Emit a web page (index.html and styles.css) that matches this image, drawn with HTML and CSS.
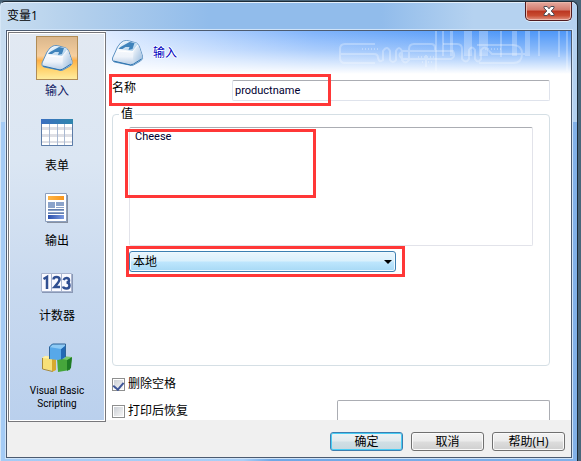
FILE: index.html
```html
<!DOCTYPE html>
<html lang="zh-CN">
<head>
<meta charset="utf-8">
<title>变量1</title>
<link rel="stylesheet" href="styles.css">
</head>
<body>
<svg class="defs" width="0" height="0" aria-hidden="true">
  <defs>
    <linearGradient id="keyTop" x1="0" y1="0" x2="1" y2="1"><stop offset="0" stop-color="#f2f9ff"/><stop offset="1" stop-color="#a9cdea"/></linearGradient>
    <linearGradient id="keySide" x1="0" y1="0" x2="0" y2="1"><stop offset="0" stop-color="#ffffff"/><stop offset=".65" stop-color="#eef3fa"/><stop offset="1" stop-color="#b4cae4"/></linearGradient>
    <linearGradient id="keyRight" x1="0" y1="0" x2="1" y2="1"><stop offset="0" stop-color="#ffffff"/><stop offset="1" stop-color="#8fb4da"/></linearGradient>
    <linearGradient id="tblHead"><stop offset="0" stop-color="#3b6fc0"/><stop offset="1" stop-color="#2f86ad"/></linearGradient>
    <linearGradient id="docHead"><stop offset="0" stop-color="#ffb545"/><stop offset="1" stop-color="#f8951c"/></linearGradient>
    <linearGradient id="docFoot"><stop offset="0" stop-color="#2c51ae"/><stop offset="1" stop-color="#7d9be0"/></linearGradient>
    <symbol id="key" viewBox="0 0 32 28">
      <path d="M6 8 Q9 3 12 2 Q15 1 18 2 L25 4 Q27 5 28 8 L31 17 Q32 20 29 22 L22 26 Q20 27 18 26 L3 23 Q0 22 1 19 Z" fill="url(#keySide)" stroke="#5e93c3"/>
      <path d="M22 12 L27 6 L31 18 Q31 20 29 21 L21 26 Z" fill="url(#keyRight)"/>
      <path d="M7 9 Q10 4 14 2 L25 4 Q27 5 25 7 L21 12 L7 10 Z" fill="url(#keyTop)"/>
      <path d="M7 10 L9 8 L18 3 L23 4 L21 10 L17 11 L18 8 L14 8 L11 10 Z" fill="#3f83bb"/>
      <path d="M6 12 L20 13 L22 12" fill="none" stroke="#fff"/>
      <path d="M2 22 L19 26 L22 25 L30 20" fill="none" stroke="#2b73af"/>
    </symbol>
  </defs>
</svg>
<div class="window">
  <header class="titlebar">
    <h1>变量1</h1>
    <button class="close" type="button" aria-label="关闭">
      <svg width="12" height="10" viewBox="0 0 12 10"><path d="M1 .5h3.200L6 2.800 7.800.500H11V2L8.200 5 11 8v1.500H7.800L6 7.200 4.200 9.500H1V8l2.800-3L1 2Z" fill="#fff" stroke="#4c4c57"/></svg>
    </button>
  </header>
  <form class="client">
    <div class="main">
      <nav class="sidebar">
        <a class="item active" href="#input"><span class="icon"><svg width="32" height="28"><use href="#key"/></svg></span>输入</a>
        <a class="item" href="#table"><span class="icon">
          <svg width="32" height="28" viewBox="0 0 32 28"><path fill="#fff" stroke="#8ba0c4" d="M.5.5h31v26H.5z"/><path fill="#dedfe5" d="M1 8h30v3H1zM1 15h30v3H1zM1 22h30v2H1z"/><path stroke="#a9b9d2" d="M8.500 5v21M16.500 5v21M23.500 5v21"/><path fill="url(#tblHead)" d="M0 0h32v5H0z"/><path fill="none" stroke="#5c7ca8" d="M.5 5v21.500h31V5"/></svg></span>表单</a>
        <a class="item" href="#output"><span class="icon">
          <svg width="24" height="31" viewBox="0 0 24 31"><path fill="#8790a0" d="M2 2h21v28H2z"/><path fill="#fff" stroke="#8c9fbd" d="M.5.5h21v28H.5z"/><path fill="url(#docHead)" d="M3 3h16v4H3z"/><path fill="#8ba3ca" d="M3 9h7v6H3zM11 9h8v4h-8zM11 14h8v1h-8zM3 17h16v1H3zM3 19h16v1H3z"/><path fill="#647fae" d="M3 16h16v1H3zM3 20h16v1H3z"/><path fill="url(#docFoot)" d="M3 22h16v4H3z"/></svg></span>输出</a>
        <a class="item" href="#counter"><span class="icon">
          <svg width="32" height="20" viewBox="0 0 32 20"><path fill="#8a98b5" d="M1 1h31v19H1z"/><path fill="#fafaff" stroke="#a9b5cf" d="M.5.5h10v18H.5zM10.500.500h10v18h-10zM20.500.500h10v18h-10z"/><g fill="none" stroke="#304f91" stroke-width="2.500"><path d="M2.500 6 6 4v12"/><path d="M12.500 6.500q0-2.500 3-2.500t3 2.500q0 2-5 7.500H19"/><path d="M22.500 7q1-2 3-2 2.500 0 2.500 2.500 0 2-2.500 2 3 0 3 3t-3 3-3.500-2"/></g></svg></span>计数器</a>
        <a class="item" href="#script"><span class="icon">
          <svg width="32" height="30" viewBox="0 0 32 30"><path fill="#f7e078" d="m1 15 3-2 10 1v14L2 26Z"/><path fill="#d7a92f" d="m11 16 4-3v14l-4 2z"/><path fill="#fff0a6" d="m1 15 3-2 11 1-4 2z"/><path fill="#46a63b" d="m16 15 15-1-2 13-12 2Z"/><path fill="#1e7b25" d="m26 17 5-3-1 11-4 3z"/><path fill="#7bc66b" d="m16 15 5-2 10 1-5 3z"/><path fill="#57a8e9" d="m8 4 3-3 14 1-1 13-7 2-9-1Z"/><path fill="#2269b5" d="m20 6 5-4-1 12-4 3z"/><path fill="#8dcaf5" d="m8 4 4-3 13 1-5 4z"/><path fill="none" stroke="#2d649a" d="M8.500 16V4l3-3h13v13"/><path fill="none" stroke="#a88a3a" d="M1.500 15v11l10 2.500"/></svg></span>Visual Basic Scripting</a>
      </nav>
      <section class="page">
        <div class="banner">
          <svg class="circuit" width="256" height="42" viewBox="0 0 256 42" aria-hidden="true">
            <g fill="#fff" opacity=".28"><path d="M120 0h2v40h-2zM127 0h2v25h-2zM135 0h3v25h-3zM149 0h8v25h-8zM164 0h9v25h-9zM185 0h2v26h-2zM197 0h5v25h-5zM210 0h5v25h-5zM223 0h2v25h-2zM243 0h2v26h-2zM251 0h2v40h-2z"/></g>
            <g fill="none" stroke="#fff" stroke-width="2" opacity=".28"><path d="M60 13H30q-5 0-5 5v9q0 5 5 5h30M25 23h34q4 0 4 4 1 5 5 2V20q4-6 7 0v9q3 4 6 0v-9q3-6 6 0v9q3 5 7 0V18q0-5 5-5h17q4 0 4 4v3h-32q-7 4 0 8h48q5-2 2-8h-24M111 24v12M128 13h14q5 0 5 5v10q4 5 7 0v-9q3-5 6 0v9q3 5 6 0v-9q4-5 7 0l4 4h33M162 14h36q9 0 9 9t-9 9h-34"/><path stroke-dasharray="1 2" d="M47 18h17M170 18h18M103 26h16M107 31h10"/></g>
          </svg>
          <svg width="33" height="28"><use href="#key"/></svg>
          <h2>输入</h2>
        </div>
        <div class="fields">
          <div class="row">
            <label for="name">名称</label>
            <input id="name" type="text" value="productname">
            <span class="mark mark-name"></span>
          </div>
          <fieldset>
            <legend><label for="value">值</label></legend>
            <div class="value">
              <textarea id="value">Cheese</textarea>
              <span class="mark mark-value"></span>
            </div>
            <div class="scope">
              <select id="scope" aria-label="范围"><option>本地</option></select>
              <svg class="arrow" width="8" height="4" viewBox="0 0 8 4"><path d="M0 0h8L4 4Z"/></svg>
              <span class="mark mark-scope"></span>
            </div>
          </fieldset>
          <div class="checks">
            <label class="check"><input type="checkbox" checked>删除空格</label>
            <div class="restore">
              <label class="check"><input type="checkbox">打印后恢复</label>
              <input class="restore-value" type="text" aria-label="恢复值">
            </div>
          </div>
        </div>
      </section>
    </div>
    <footer>
      <button class="btn primary" type="button">确定</button>
      <button class="btn" type="button">取消</button>
      <button class="btn" type="button">帮助(H)</button>
    </footer>
  </form>
</div>
</body>
</html>
```
FILE: styles.css
```css
* { box-sizing: border-box; }
body {
  margin: 0;
  min-height: 100vh;
  display: flex;
  background: #49657a;
  padding: 1px 3px 0 0;
  font: 12px/16px "Open Sans", "Noto Sans CJK SC", sans-serif;
  color: #000;
}
.defs { position: absolute; }
h1, h2 { margin: 0; font-size: 12px; font-weight: 400; }
button, input, select, textarea { font: inherit; color: inherit; margin: 0; }

.window {
  flex: 1;
  display: flex;
  flex-direction: column;
  padding: 0 5px 3px 5px;
  border: 1px solid #1d2c38;
  border-left-color: #d5e6f6;
  border-bottom: 0;
  border-radius: 5px 6px 0 0;
  background:
    linear-gradient(90deg, #c8ddf0 0, #b2cfec 14%, #91bceb 36%, #91bceb 66%, #b5d2f0 82%, #b5d2f0 100%) 0 0 / 100% 120px no-repeat,
    linear-gradient(90deg, #a4cbf5 0, #a9cff7 42%, #70a8e5 47%, #82b1e8 100%);
  box-shadow: inset 0 1px #e4f0fc;
}
.titlebar {
  height: 28px;
  display: flex;
  justify-content: space-between;
  align-items: flex-start;
}
.titlebar h1 { padding: 6px 1px; }
.close {
  width: 47px;
  height: 19px;
  display: flex;
  align-items: center;
  justify-content: center;
  padding: 0;
  border: 1px solid #511b20;
  border-top: 0;
  border-radius: 0 0 5px 5px;
  background: linear-gradient(#e5aaa0, #d37a6c 45%, #bb3520 50%, #c84c32 75%, #e29382);
  box-shadow: inset 0 0 0 1px #edb8ab, 0 1px #e2effb;
}

.client {
  flex: 1;
  display: flex;
  flex-direction: column;
  border: 1px solid #4c5b70;
  background: #f0f0f0;
  box-shadow: 0 0 0 1px #cfe3f8;
}
.main { flex: 1; display: flex; background: #fff; }
.sidebar {
  width: 98px;
  margin: 1px 0 -2px 1px;
  display: flex;
  flex-direction: column;
  padding: 3px 8px 0;
  border: 1px solid #77777b;
  outline: 1px solid #fff;
  outline-offset: -2px;
  background: linear-gradient(#e2e9f2, #dbe6f3 33%, #c8d9ef 66%, #bad0ed);
}
.item {
  height: 75px;
  display: flex;
  flex-direction: column;
  align-items: center;
  gap: 3px;
  color: #000;
  text-align: center;
  text-decoration: none;
}
.item:last-child { font: 10px/13px Roboto, "Noto Sans CJK SC", sans-serif; padding: 0 8px; gap: 4px; }
.active { color: #151c65; }
.icon {
  width: 42px;
  height: 44px;
  flex: none;
  display: flex;
  align-items: center;
  justify-content: center;
}
.active .icon {
  border: 1px solid #b08c56;
  background: linear-gradient(#dbb78c, #f6cf9f 45%, #ffb047 56%, #ffd06a 75%, #ffec9e);
}

.page { flex: 1; min-width: 0; }
.banner {
  position: relative;
  height: 43px;
  display: flex;
  align-items: center;
  gap: 9px;
  padding-left: 5px;
  background:
    linear-gradient(rgba(255,255,255,0), rgba(255,255,255,.35) 45%, #fff),
    linear-gradient(90deg, #dceaff, #7fb3fb 45%, #4e97f8 85%);
}
.circuit { position: absolute; top: 0; right: 0; }
.banner h2 { color: #0000bf; text-shadow: 1px 0 #fff, -1px 0 #fff, 0 1px #fff, 0 -1px #fff; }

.fields { padding: 6px 21px 0 6px; }
.row { position: relative; display: flex; }
.row label { width: 120px; }
input[type="text"] {
  height: 21px;
  padding: 0 2px;
  border: 1px solid #dfe3ec;
  border-top-color: #abadb3;
  border-radius: 2px;
  background: #fff;
}
.row input { flex: 1; min-width: 0; }
.row input, textarea { color: #000030; font: 11px/16px Roboto, "Noto Sans CJK SC", sans-serif; }
fieldset {
  height: 260px;
  margin: 5px 0 0;
  padding: 5px 16px 0;
  border: 1px solid #d5dfe5;
  border-radius: 4px;
  min-width: 0;
}
legend { height: 16px; margin-left: -10px; padding: 0 2px; }
.value, .scope { position: relative; }
textarea {
  display: block;
  width: 100%;
  height: 119px;
  padding: 1px 5px;
  border: 1px solid #e2e3ea;
  border-top-color: #abadb3;
  border-radius: 2px;
  resize: none;
}
.scope { display: flex; align-items: center; width: 267px; margin-top: 5px; }
select {
  appearance: none;
  width: 100%;
  height: 21px;
  padding: 0 3px;
  border: 1px solid #3c7fb1;
  border-radius: 3px;
  background: linear-gradient(#eaf6fd, #d9f0fc 48%, #bee6fd 52%, #a7d9f5);
  box-shadow: inset 0 0 0 1px #eff9fe;
}
.arrow { position: absolute; right: 4px; pointer-events: none; }

.mark { position: absolute; border: 3px solid #ff3737; pointer-events: none; }
.mark-name { left: -3px; top: -6px; width: 222px; height: 32px; }
.mark-value { left: -4px; top: 2px; width: 191px; height: 69px; }
.mark-scope { left: -3px; top: -5px; width: 279px; height: 31px; }

.checks { padding-top: 10px; }
.check { display: flex; align-items: center; gap: 3px; }
.check input {
  appearance: none;
  display: grid;
  place-items: center;
  width: 13px;
  height: 13px;
  padding: 1px;
  border: 1px solid #8e8f8f;
  background: linear-gradient(135deg, #cbcfd5, #f6f6f6) content-box, #fff;
}
.check input:checked::after {
  content: "";
  width: 5px;
  height: 8px;
  margin-bottom: 2px;
  border: solid #3d5598;
  border-width: 0 2px 2px 0;
  transform: rotate(40deg);
}
.restore { display: flex; justify-content: space-between; align-items: flex-end; height: 28px; }
.restore .check { padding-bottom: 1px; }
.restore .restore-value { width: 213px; height: 20px; border-color: #abadb3; border-bottom: 0; border-radius: 2px 2px 0 0; }

footer {
  height: 37px;
  display: flex;
  justify-content: flex-end;
  align-items: center;
  gap: 8px;
  padding: 6px 6px 0 0;
  margin-left: 100px;
}
.btn {
  width: 73px;
  height: 19px;
  padding: 0;
  line-height: 17px;
  border: 1px solid #707070;
  border-radius: 3px;
  background: linear-gradient(#f3f3f3, #ebebeb 48%, #dddddd 52%, #cfcfcf);
  box-shadow: inset 0 0 0 1px #fafafa;
}
.primary {
  border-color: #3c7fb1;
  background: linear-gradient(#edf3f5, #e2eaed 48%, #d0dfe5 52%, #c8d8df);
  box-shadow: inset 0 0 0 1px #48cdf4;
}
```
